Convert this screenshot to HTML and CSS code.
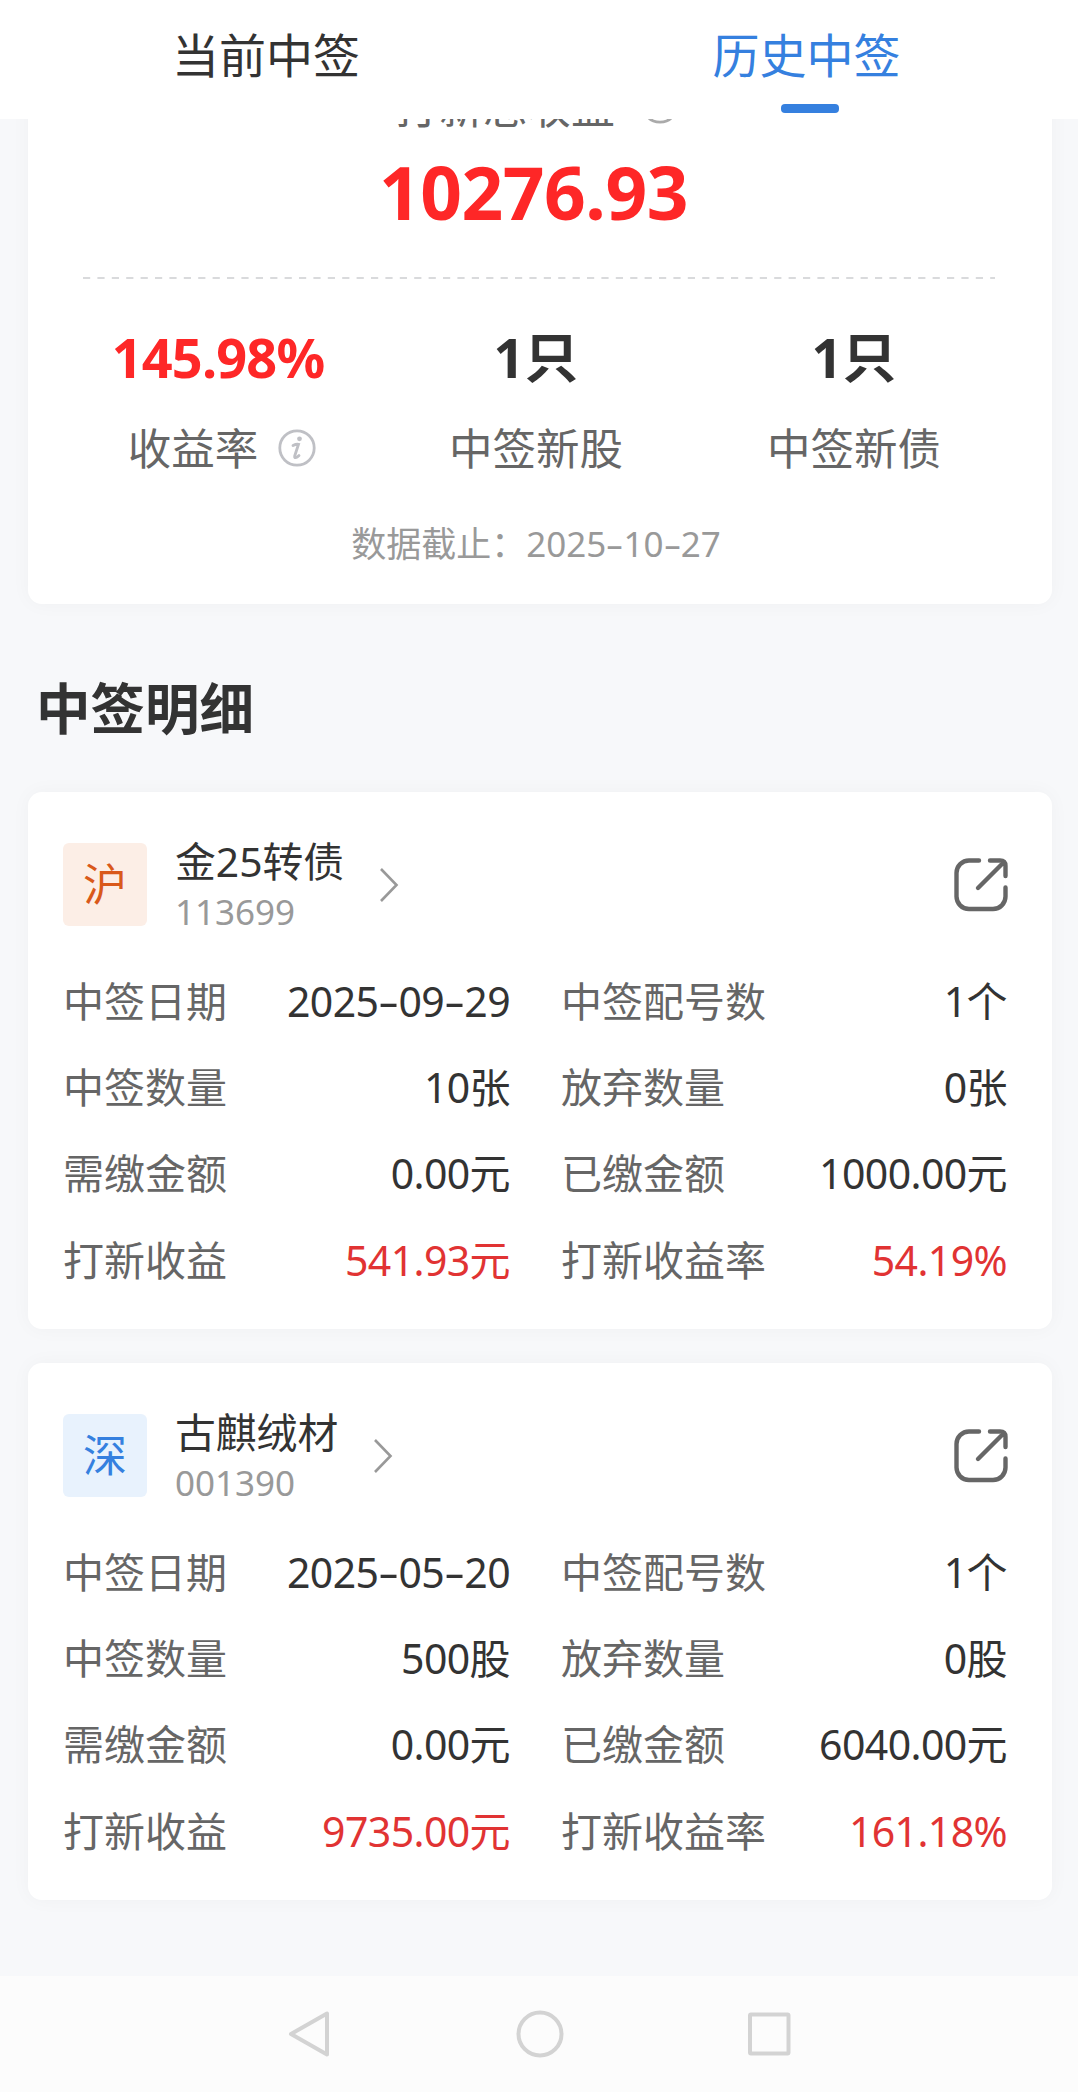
FILE: index.html
```
<!DOCTYPE html>
<html lang="zh-CN">
<head>
    <meta charset="UTF-8">
    <meta name="viewport" content="width=device-width, initial-scale=1.0">
    <title>历史中签</title>

    <link rel="stylesheet" href="styles.css">
</head>
<body>
    <header class="tabs">
        <div class="tab">当前中签</div>
        <div class="tab active">历史中签</div>
    </header>

    <main>
        <section class="card summary">
            <div class="summary-title">
                <span>打新总收益</span>
                <svg class="info-icon" viewBox="0 0 38 38">
                    <circle cx="19" cy="19" r="17.2" />
                    <circle class="dot" cx="21.5" cy="9.8" r="2.4" />
                    <path d="M15 16.5c2-1 4-1.4 5.5-1.2l-3.8 11.7c-.6 2.5 2 2 4.3-.5" />
                </svg>
            </div>
            <div class="total">10276.93</div>
            <svg class="divider" viewBox="0 0 912 2"><path d="M0 1H912" /></svg>
            <div class="stats">
                <div class="stat">
                    <div class="stat-value red">145.98%</div>
                    <div class="stat-label with-icon">
                        <span>收益率</span>
                        <svg class="info-icon" viewBox="0 0 38 38">
                            <circle cx="19" cy="19" r="17.2" />
                            <circle class="dot" cx="21.5" cy="9.8" r="2.4" />
                            <path d="M15 16.5c2-1 4-1.4 5.5-1.2l-3.8 11.7c-.6 2.5 2 2 4.3-.5" />
                        </svg>
                    </div>
                </div>
                <div class="stat">
                    <div class="stat-value">1只</div>
                    <div class="stat-label">中签新股</div>
                </div>
                <div class="stat">
                    <div class="stat-value">1只</div>
                    <div class="stat-label">中签新债</div>
                </div>
            </div>
            <div class="deadline">数据截止：2025<i>-</i>10<i>-</i>27</div>
        </section>

        <h2>中签明细</h2>

        <section class="card detail">
            <div class="stock">
                <div class="badge sh">沪</div>
                <div class="stock-info">
                    <div class="stock-name">金25转债</div>
                    <div class="stock-code">113699</div>
                </div>
                <svg class="arrow" viewBox="0 0 20 36"><path d="M2 2L17.5 18L2 34" /></svg>
                <svg class="share" viewBox="0 0 54 54">
                    <path d="M25 2.5H15A12.5 12.5 0 0 0 2.5 15V38.5A12.5 12.5 0 0 0 15 51H39A12.5 12.5 0 0 0 51.5 38.5V29.5" />
                    <path d="M36 2.5H46Q51.5 2.5 51.5 8V18M49.5 4.5L24 30" />
                </svg>
            </div>
            <div class="grid">
                <div class="item"><span>中签日期</span><b>2025<i>-</i>09<i>-</i>29</b></div>
                <div class="item"><span>中签配号数</span><b>1个</b></div>
                <div class="item"><span>中签数量</span><b>10张</b></div>
                <div class="item"><span>放弃数量</span><b>0张</b></div>
                <div class="item"><span>需缴金额</span><b>0.00元</b></div>
                <div class="item"><span>已缴金额</span><b>1000.00元</b></div>
                <div class="item"><span>打新收益</span><b class="profit">541.93元</b></div>
                <div class="item"><span>打新收益率</span><b class="profit">54.19%</b></div>
            </div>
        </section>

        <section class="card detail">
            <div class="stock">
                <div class="badge sz">深</div>
                <div class="stock-info">
                    <div class="stock-name">古麒绒材</div>
                    <div class="stock-code">001390</div>
                </div>
                <svg class="arrow" viewBox="0 0 20 36"><path d="M2 2L17.5 18L2 34" /></svg>
                <svg class="share" viewBox="0 0 54 54">
                    <path d="M25 2.5H15A12.5 12.5 0 0 0 2.5 15V38.5A12.5 12.5 0 0 0 15 51H39A12.5 12.5 0 0 0 51.5 38.5V29.5" />
                    <path d="M36 2.5H46Q51.5 2.5 51.5 8V18M49.5 4.5L24 30" />
                </svg>
            </div>
            <div class="grid">
                <div class="item"><span>中签日期</span><b>2025<i>-</i>05<i>-</i>20</b></div>
                <div class="item"><span>中签配号数</span><b>1个</b></div>
                <div class="item"><span>中签数量</span><b>500股</b></div>
                <div class="item"><span>放弃数量</span><b>0股</b></div>
                <div class="item"><span>需缴金额</span><b>0.00元</b></div>
                <div class="item"><span>已缴金额</span><b>6040.00元</b></div>
                <div class="item"><span>打新收益</span><b class="profit">9735.00元</b></div>
                <div class="item"><span>打新收益率</span><b class="profit">161.18%</b></div>
            </div>
        </section>
    </main>

    <nav class="system-bar">
        <svg viewBox="0 0 48 48"><path d="M40 3.5V44.5L4 24Z" /></svg>
        <svg viewBox="0 0 48 48"><circle cx="24" cy="24" r="21.5" /></svg>
        <svg viewBox="0 0 48 48"><rect x="5" y="4.5" width="38.5" height="39" rx="1" /></svg>
    </nav>
</body>
</html>
```
FILE: styles.css
```
:root {
    --blue: #3580df;
    --red: #fe2727;
    --dark: #333;
    --grey: #666;
    --light: #999;
}

* {
    margin: 0;
    padding: 0;
    box-sizing: border-box;
}

body {
    display: flex;
    flex-direction: column;
    height: 2092px;
    overflow: hidden;
    background-color: #f7f8fa;
    color: var(--dark);
    font-family: 'Noto Sans', 'Noto Sans CJK SC', sans-serif;
}

svg {
    fill: none;
    flex-shrink: 0;
}

/* date separators are wider than the font's own hyphen */
i {
    display: inline-block;
    width: 0.49em;
    text-align: center;
    font-style: normal;
    transform: scaleX(1.6);
}

.tabs {
    position: relative;
    z-index: 1;
    display: flex;
    height: 119px;
    background: #fff;
}

.tab {
    position: relative;
    width: 50%;
    padding-right: 7px;
    text-align: center;
    font-size: 47px;
    line-height: 111px;
}

.tab.active {
    padding-right: 4px;
    color: var(--blue);
}

.tab.active::after {
    content: '';
    position: absolute;
    left: 242px;
    bottom: 6px;
    width: 58px;
    height: 9px;
    border-radius: 4px;
    background: var(--blue);
}

main {
    flex: 1;
    padding: 0 26px 0 28px;
}

.card {
    background: #fff;
    border-radius: 14px;
    box-shadow: 0 0 20px rgba(0, 0, 0, 0.035);
}

.summary {
    height: 525px;
    margin-top: -40px;
}

.summary-title {
    display: flex;
    justify-content: center;
    align-items: center;
    gap: 26px;
    height: 52px;
    padding-right: 6px;
    font-size: 44px;
    color: var(--grey);
}

.info-icon {
    width: 38px;
    height: 38px;
    stroke: #bfc0c5;
    stroke-width: 2.8;
    stroke-linecap: round;
}

.summary-title .info-icon {
    stroke: #aaa;
}

.info-icon .dot {
    fill: #bfc0c5;
    stroke: none;
}

.total {
    height: 118px;
    padding: 21px 13px 0 0;
    text-align: center;
    font-size: 73px;
    font-weight: 700;
    line-height: 80px;
    letter-spacing: -0.5px;
    color: var(--red);
}

.divider {
    display: block;
    width: 912px;
    height: 2px;
    margin: 28px 0 0 55px;
    stroke: #d9dadc;
    stroke-width: 2;
    stroke-dasharray: 7.2 7.2;
}

.stats {
    display: grid;
    grid-template-columns: repeat(3, 318px);
    margin: 43px 0 0 31px;
    text-align: center;
}

.stat-value {
    font-size: 54px;
    font-weight: 700;
    line-height: 70px;
}

.stat-value.red {
    letter-spacing: -0.8px;
    color: var(--red);
}

.stat-label {
    height: 60px;
    margin-top: 26px;
    font-size: 43.5px;
    line-height: 60px;
    color: var(--grey);
}

.stat-label.with-icon {
    display: flex;
    justify-content: center;
    align-items: center;
    gap: 20px;
    padding-left: 8px;
}

.deadline {
    margin-top: 36px;
    padding-right: 8px;
    text-align: center;
    font-size: 35px;
    line-height: 60px;
    color: var(--light);
}

h2 {
    height: 188px;
    padding: 64px 0 0 8px;
    font-size: 54.5px;
    line-height: 80px;
}

.detail {
    height: 537px;
    margin-bottom: 34px;
    padding: 51px 43px 0 35px;
}

.stock {
    display: flex;
    align-items: center;
    height: 83px;
}

.badge {
    width: 84px;
    height: 83px;
    border-radius: 6px;
    text-align: center;
    font-size: 44px;
    line-height: 83px;
}

.badge.sh {
    background: #fceee6;
    color: #d9591a;
}

.badge.sz {
    background: #e8f2fd;
    color: var(--blue);
}

.stock-info {
    margin-left: 28px;
    padding-top: 4px;
}

.stock-name {
    font-size: 40.8px;
    line-height: 50px;
}

.stock-code {
    font-size: 35px;
    line-height: 52px;
    color: var(--light);
}

.arrow {
    width: 20px;
    height: 36px;
    margin-left: 35px;
    stroke: var(--light);
    stroke-width: 2.6;
}

.share {
    width: 54px;
    height: 54px;
    margin: 0 1px 0 auto;
    stroke: var(--grey);
    stroke-width: 4.4;
    stroke-linecap: round;
}

.grid {
    display: grid;
    grid-template-columns: 447px 446px;
    column-gap: 51px;
    margin-top: 32px;
}

.item {
    display: flex;
    justify-content: space-between;
    font-size: 41px;
    line-height: 86.2px;
    white-space: nowrap;
}

.item span {
    color: var(--grey);
}

.item b {
    font-weight: 400;
    letter-spacing: -0.6px;
}

.item .profit {
    color: #e13333;
}

.system-bar {
    display: flex;
    justify-content: center;
    align-items: center;
    gap: 181px;
    height: 116px;
    padding-left: 2px;
    background: #fcfcfc;
}

.system-bar svg {
    width: 48px;
    height: 48px;
    stroke: #d3d3d3;
    stroke-width: 4;
    stroke-linejoin: round;
}
```
